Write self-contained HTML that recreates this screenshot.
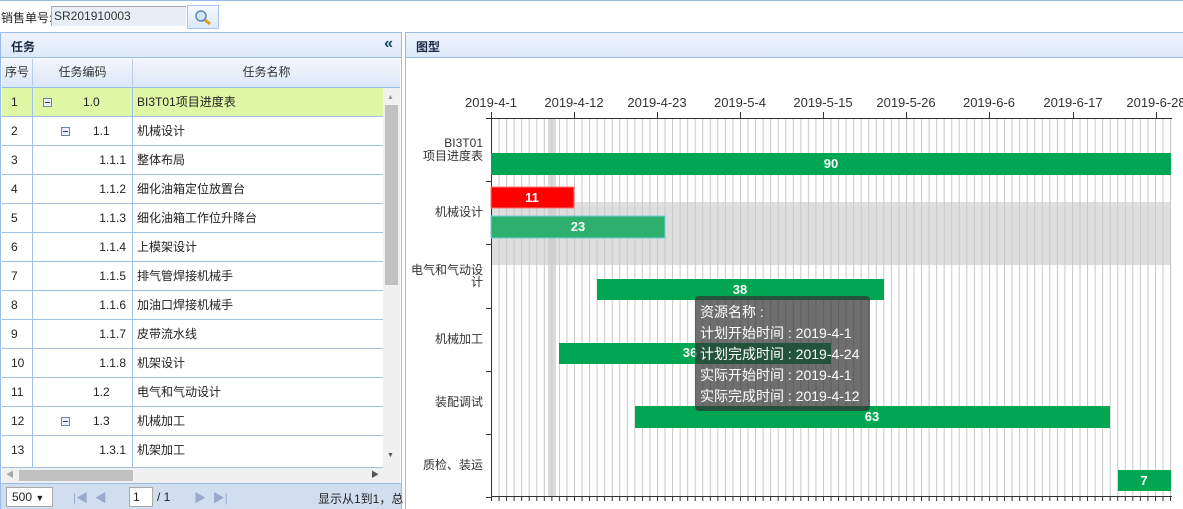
<!DOCTYPE html>
<html><head><meta charset="utf-8"><style>
*{margin:0;padding:0;box-sizing:border-box}
body{width:1183px;height:509px;overflow:hidden;background:#fff;font-family:"Liberation Sans","Noto Sans CJK SC",sans-serif;font-size:12px;color:#222;position:relative}
.a{position:absolute}
.row{position:absolute;left:2px;width:381px;height:29px;border-bottom:1px solid #a3c0e8;line-height:28px}
.row div{position:absolute;top:0;height:28px}
.c1{left:0;width:31px;border-right:1px solid #a3c0e8;padding-left:9px}
.c2{left:31px;width:100px;border-right:1px solid #a3c0e8}
.c3{left:135px}
.pm{position:absolute;top:10px;width:9px;height:9px;border:1px solid #6a86b0;background:#eef;}
.pm:after{content:"";position:absolute;left:1px;top:3px;width:5px;height:1px;background:#335}
</style></head><body>
<div class="a" style="left:0;top:0;width:1183px;height:1px;background:#99bbe8"></div>
<div class="a" style="left:1px;top:9px;font-size:12px">销售单号:</div>
<div class="a" style="left:51px;top:6px;width:135px;height:20px;background:#e8eef8;border:1px solid #aab;border-right:none;border-bottom:none;padding:2px 2px;font-size:12px;color:#333">SR201910003</div>
<div class="a" style="left:187px;top:5px;width:32px;height:24px;border:1px solid #a8c4ec;background:linear-gradient(#f6f9ff,#dce8f8)">
<svg width="30" height="22"><circle cx="13" cy="10" r="5" fill="#cfe6fb" stroke="#5a8ab8" stroke-width="1.5"/><line x1="17" y1="14" x2="22" y2="18" stroke="#d9a020" stroke-width="3"/></svg></div>
<!-- left panel -->
<div class="a" style="left:0;top:32px;width:402px;height:477px;border:1px solid #99bbe8"></div>
<div class="a" style="left:1px;top:33px;width:400px;height:25px;background:linear-gradient(#eef4fd,#dde9f9);border-bottom:1px solid #99bbe8;font-weight:bold;color:#1a2a44;padding:5px 10px">任务<span style="position:absolute;right:8px;top:2px;font-size:16px;color:#15425b">«</span></div>
<div class="a" style="left:2px;top:59px;width:398px;height:29px;background:linear-gradient(#f3f7fd,#dbe7f8);border-bottom:1px solid #99bbe8;line-height:27px;font-size:12px;color:#333">
<span class="a" style="left:0;width:31px;border-right:1px solid #b8cde8;text-align:center">序号</span>
<span class="a" style="left:31px;width:100px;border-right:1px solid #b8cde8;text-align:center">任务编码</span>
<span class="a" style="left:131px;width:267px;text-align:center">任务名称</span></div>
<div class="row" style="top:88px;background:#dff8a6"><div class="c1">1</div><div class="c2"><span class="pm" style="left:10px"></span><span style="position:absolute;left:50px">1.0</span></div><div class="c3">BI3T01项目进度表</div></div>
<div class="row" style="top:117px"><div class="c1">2</div><div class="c2"><span class="pm" style="left:28px"></span><span style="position:absolute;left:60px">1.1</span></div><div class="c3">机械设计</div></div>
<div class="row" style="top:146px"><div class="c1">3</div><div class="c2"><span style="position:absolute;right:6px">1.1.1</span></div><div class="c3">整体布局</div></div>
<div class="row" style="top:175px"><div class="c1">4</div><div class="c2"><span style="position:absolute;right:6px">1.1.2</span></div><div class="c3">细化油箱定位放置台</div></div>
<div class="row" style="top:204px"><div class="c1">5</div><div class="c2"><span style="position:absolute;right:6px">1.1.3</span></div><div class="c3">细化油箱工作位升降台</div></div>
<div class="row" style="top:233px"><div class="c1">6</div><div class="c2"><span style="position:absolute;right:6px">1.1.4</span></div><div class="c3">上模架设计</div></div>
<div class="row" style="top:262px"><div class="c1">7</div><div class="c2"><span style="position:absolute;right:6px">1.1.5</span></div><div class="c3">排气管焊接机械手</div></div>
<div class="row" style="top:291px"><div class="c1">8</div><div class="c2"><span style="position:absolute;right:6px">1.1.6</span></div><div class="c3">加油口焊接机械手</div></div>
<div class="row" style="top:320px"><div class="c1">9</div><div class="c2"><span style="position:absolute;right:6px">1.1.7</span></div><div class="c3">皮带流水线</div></div>
<div class="row" style="top:349px"><div class="c1">10</div><div class="c2"><span style="position:absolute;right:6px">1.1.8</span></div><div class="c3">机架设计</div></div>
<div class="row" style="top:378px"><div class="c1">11</div><div class="c2"><span style="position:absolute;left:60px">1.2</span></div><div class="c3">电气和气动设计</div></div>
<div class="row" style="top:407px"><div class="c1">12</div><div class="c2"><span class="pm" style="left:28px"></span><span style="position:absolute;left:60px">1.3</span></div><div class="c3">机械加工</div></div>
<div class="row" style="top:436px;height:32px"><div class="c1" style="height:32px">13</div><div class="c2" style="height:32px"><span style="position:absolute;right:6px">1.3.1</span></div><div class="c3">机架加工</div></div>
<div class="a" style="left:383px;top:88px;width:17px;height:380px;background:#f0f0f0"></div>
<div class="a" style="left:385px;top:105px;width:13px;height:180px;background:#c1c1c1"></div>
<div class="a" style="left:387px;top:94px;font-size:7px;color:#999">▲</div>
<div class="a" style="left:387px;top:452px;font-size:7px;color:#555">▼</div>
<div class="a" style="left:2px;top:468px;width:398px;height:15px;background:#f0f0f0"></div>
<div class="a" style="left:19px;top:470px;width:114px;height:11px;background:#c1c1c1"></div>
<div class="a" style="left:6px;top:469px;font-size:8px;color:#aaa">◀</div>
<div class="a" style="left:371px;top:469px;font-size:8px;color:#555">▶</div>
<div class="a" style="left:1px;top:483px;width:400px;height:26px;background:#d0def0;border-top:1px solid #99bbe8"></div>
<div class="a" style="left:6px;top:487px;width:47px;height:20px;background:#fff;border:1px solid #aaa;padding:2px 5px">500 <span style="font-size:9px">▼</span></div>
<div class="a" style="left:73px;top:489px;color:#99aacc;font-size:12px">|◀ &nbsp;◀</div>
<div class="a" style="left:129px;top:487px;width:24px;height:20px;background:#fff;border:1px solid #aaa;padding:2px 3px">1</div>
<div class="a" style="left:157px;top:490px">/ 1</div>
<div class="a" style="left:194px;top:489px;color:#99aacc">▶ &nbsp;▶|</div>
<div class="a" style="left:318px;top:490px">显示从1到1，总</div>
<!-- right panel -->
<div class="a" style="left:405px;top:32px;width:778px;height:477px;border-left:1px solid #99bbe8;border-top:1px solid #99bbe8"></div>
<div class="a" style="left:406px;top:33px;width:777px;height:25px;background:linear-gradient(#eef4fd,#dde9f9);border-bottom:1px solid #99bbe8;font-weight:bold;color:#1a2a44;padding:5px 10px">图型</div>
<svg class="a" style="left:0;top:0" width="1183" height="509" font-family="Liberation Sans,Noto Sans CJK SC,sans-serif">
<defs><pattern id="g" x="491" y="0" width="7.545" height="10" patternUnits="userSpaceOnUse"><line x1="0.5" y1="0" x2="0.5" y2="10" stroke="#c8c8c8" stroke-width="1"/></pattern>
<pattern id="t" x="491" y="0" width="7.545" height="10" patternUnits="userSpaceOnUse"><line x1="0.5" y1="0" x2="0.5" y2="10" stroke="#333" stroke-width="1"/></pattern></defs>
<rect x="491" y="202" width="680" height="63" fill="#dedede"/>
<rect x="491" y="118" width="681" height="378" fill="url(#g)"/>
<rect x="548" y="118" width="8" height="378" fill="#ccc" opacity="0.7"/>
<rect x="491" y="496" width="681" height="5" fill="url(#t)"/>
<line x1="491" y1="118.5" x2="1172" y2="118.5" stroke="#333"/>
<line x1="491" y1="496.5" x2="1172" y2="496.5" stroke="#333"/>
<line x1="491.5" y1="118" x2="491.5" y2="497" stroke="#333"/>
<g stroke="#333"><line x1="491.5" y1="112" x2="491.5" y2="118"/><line x1="574.5" y1="112" x2="574.5" y2="118"/><line x1="657.5" y1="112" x2="657.5" y2="118"/><line x1="740.5" y1="112" x2="740.5" y2="118"/><line x1="823.5" y1="112" x2="823.5" y2="118"/><line x1="906.5" y1="112" x2="906.5" y2="118"/><line x1="989.5" y1="112" x2="989.5" y2="118"/><line x1="1073.5" y1="112" x2="1073.5" y2="118"/><line x1="1156.5" y1="112" x2="1156.5" y2="118"/>
<line x1="486" y1="118.5" x2="491" y2="118.5"/><line x1="486" y1="181.5" x2="491" y2="181.5"/><line x1="486" y1="244.5" x2="491" y2="244.5"/><line x1="486" y1="308.5" x2="491" y2="308.5"/><line x1="486" y1="371.5" x2="491" y2="371.5"/><line x1="486" y1="434.5" x2="491" y2="434.5"/><line x1="486" y1="497.5" x2="491" y2="497.5"/></g>
<g font-size="13" fill="#333" text-anchor="middle"><text x="491" y="107">2019-4-1</text><text x="574" y="107">2019-4-12</text><text x="657" y="107">2019-4-23</text><text x="740" y="107">2019-5-4</text><text x="823" y="107">2019-5-15</text><text x="906" y="107">2019-5-26</text><text x="989" y="107">2019-6-6</text><text x="1073" y="107">2019-6-17</text><text x="1156" y="107">2019-6-28</text></g>
<g font-size="12" fill="#333" text-anchor="end"><text x="483" y="147">BI3T01</text><text x="483" y="160">项目进度表</text><text x="483" y="216">机械设计</text><text x="483" y="274">电气和气动设</text><text x="483" y="286">计</text><text x="483" y="343">机械加工</text><text x="483" y="406">装配调试</text><text x="483" y="469">质检、装运</text></g>
<rect x="491" y="153" width="680" height="22" fill="#00a651"/>
<rect x="491" y="187" width="83" height="21" fill="#f00" stroke="#f77"/>
<rect x="491" y="216" width="174" height="22" fill="#2db06e" stroke="#7cd"/>
<rect x="597" y="279" width="287" height="21" fill="#00a651"/>
<rect x="559" y="343" width="272" height="21" fill="#00a651"/>
<rect x="635" y="406" width="475" height="22" fill="#00a651"/>
<rect x="1118" y="470" width="53" height="21" fill="#00a651"/>
<g font-size="13" fill="#fff" font-weight="bold" text-anchor="middle"><text x="831" y="168">90</text><text x="532" y="202">11</text><text x="578" y="231">23</text><text x="740" y="294">38</text><text x="690" y="357">36</text><text x="872" y="421">63</text><text x="1144" y="485">7</text></g>
<rect x="695" y="296" width="175" height="115" rx="4" fill="#323232" opacity="0.7"/>
<g font-size="14" fill="#fff"><text x="700" y="317">资源名称 :</text><text x="700" y="338">计划开始时间 : 2019-4-1</text><text x="700" y="359">计划完成时间 : 2019-4-24</text><text x="700" y="380">实际开始时间 : 2019-4-1</text><text x="700" y="401">实际完成时间 : 2019-4-12</text></g>
</svg>
</body></html>
